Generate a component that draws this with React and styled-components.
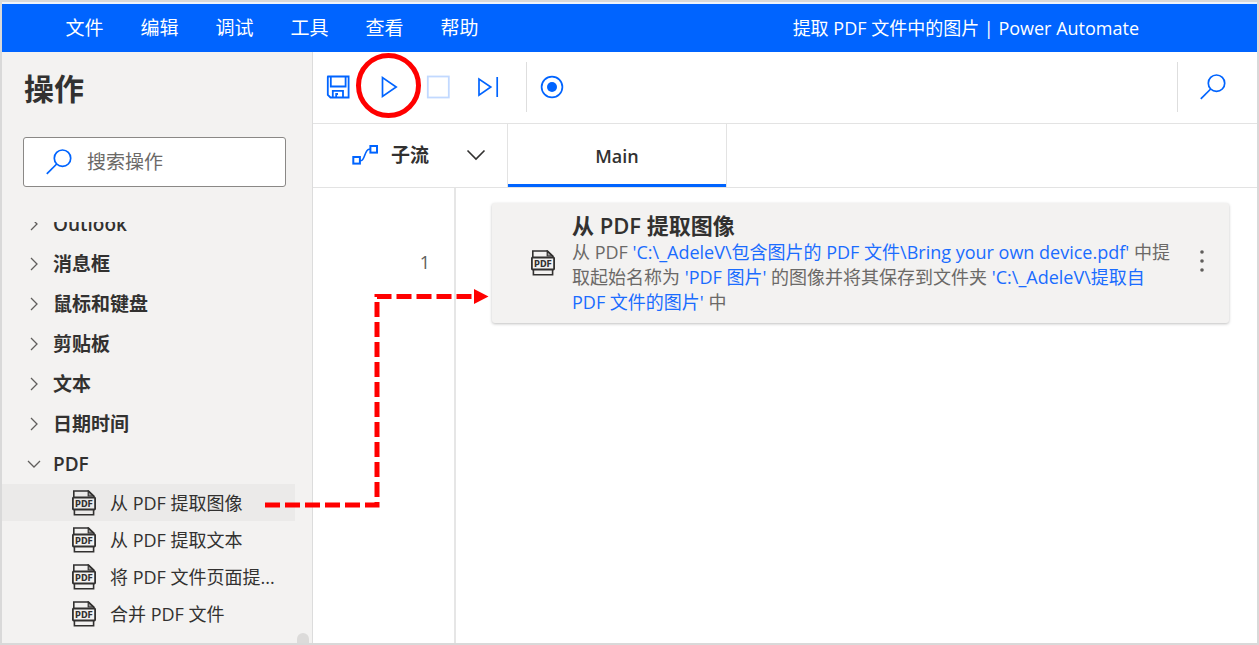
import React, { useState } from "react";
import styled, { createGlobalStyle } from "styled-components";

const BLUE = "#0064ff";
const LINE = "#e3e3e3";

const GlobalStyle = createGlobalStyle`
* {
  box-sizing: border-box;
}
body {
  margin: 0;
  background: white;
  color: #323130;
  font-family: "Open Sans", "Noto Sans CJK SC", sans-serif;
  font-size: 18px;
  line-height: 24px;
}
button, input {
  font: inherit;
  color: inherit;
}
svg {
  flex: none;
}
`;

const Window = styled.div`
  position: relative;
  display: flex;
  flex-direction: column;
  height: 100vh;
  border: 2px solid #d9d9d9;
`;
const MenuBar = styled.header`
  display: flex;
  align-items: center;
  justify-content: space-between;
  height: 50px;
  flex: none;
  padding: 0 118px 0 45px;
  border-top: 2px solid #eef3fb;
  background: ${BLUE};
  color: white;
`;
const Menu = styled.nav`
  display: flex;
`;
const MenuButton = styled.button`
  width: 75px;
  padding: 0;
  border: none;
  background: none;
  font-size: 19px;
  cursor: pointer;
`;
const Body = styled.div`
  display: flex;
  flex: 1;
  min-height: 0;
`;

const Sidebar = styled.aside`
  position: relative;
  display: flex;
  flex-direction: column;
  width: 311px;
  flex: none;
  border-right: 1px solid #dcdcdc;
  background: #f3f2f1;
`;
const Title = styled.h1`
  margin: 15px 22px 0;
  font-size: 30px;
  line-height: 44px;
  font-weight: 600;
`;
const SearchBox = styled.label`
  display: flex;
  align-items: center;
  gap: 15px;
  height: 50px;
  flex: none;
  margin: 26px 26px 35px 21px;
  padding: 0 22px;
  border: 1px solid #8a8886;
  border-radius: 3px;
  background: white;
`;
const SearchInput = styled.input`
  flex: 1;
  min-width: 0;
  padding: 0;
  border: none;
  outline: none;
  background: none;
  font-size: 19px;
  &::placeholder {
    color: #6b6967;
    opacity: 1;
  }
`;
const TreeView = styled.div`
  flex: 1;
  overflow: hidden;
`;
const Tree = styled.ul`
  margin: -18px 0 0;
  padding: 0;
  list-style: none;
`;
const Category = styled.button`
  display: flex;
  align-items: center;
  gap: 12px;
  width: 100%;
  height: 40px;
  padding: 0 25px;
  border: none;
  background: none;
  font-size: 19px;
  font-weight: 600;
  text-align: left;
  cursor: pointer;
`;
const Actions = styled.ul`
  margin: 0;
  padding: 0;
  list-style: none;
`;
const Action = styled.button`
  display: flex;
  align-items: center;
  gap: 14px;
  width: 293px;
  height: 37px;
  padding: 0 8px 0 70px;
  border: none;
  background: ${(props) => (props.$active ? "#ebeae9" : "none")};
  white-space: nowrap;
  cursor: pointer;
`;
const ScrollThumb = styled.div`
  position: absolute;
  right: 3px;
  bottom: 0;
  width: 12px;
  height: 10px;
  border-radius: 6px 6px 0 0;
  background: #dcdbda;
`;

const Main = styled.main`
  display: flex;
  flex-direction: column;
  flex: 1;
  min-width: 0;
`;
const Toolbar = styled.div`
  display: flex;
  align-items: center;
  height: 72px;
  flex: none;
  padding: 0 19px 2px 0;
  border-bottom: 1px solid ${LINE};
`;
const ToolButton = styled.button`
  position: relative;
  display: flex;
  align-items: center;
  justify-content: center;
  width: 50px;
  height: 50px;
  padding: 0;
  border: none;
  background: none;
  color: ${BLUE};
  cursor: pointer;
`;
const Divider = styled.div`
  width: 1px;
  height: 50px;
  margin-left: ${(props) => (props.$push ? "auto" : "13px")};
  margin-right: ${(props) => (props.$push ? "10px" : "0")};
  background: #dedede;
`;
const Ring = styled.span`
  position: absolute;
  left: -7px;
  top: -9px;
  width: 65px;
  height: 65px;
  border: 5px solid #f00;
  border-radius: 50%;
  pointer-events: none;
`;
const Tabs = styled.div`
  display: flex;
  height: 64px;
  flex: none;
  border-bottom: 1px solid ${LINE};
`;
const Subflows = styled.button`
  display: flex;
  align-items: center;
  width: 195px;
  padding: 0 21px 2px 39px;
  border: none;
  border-right: 1px solid ${LINE};
  background: none;
  font-size: 19px;
  font-weight: 600;
  cursor: pointer;
`;
const SubflowsLabel = styled.span`
  flex: 1;
  padding-left: 12px;
  text-align: left;
`;
const Tab = styled.button`
  width: 219px;
  border: none;
  border-right: 1px solid ${LINE};
  background: none;
  box-shadow: inset 0 -3px ${BLUE};
  font-weight: 600;
  cursor: pointer;
`;
const Canvas = styled.div`
  display: flex;
  flex: 1;
`;
const Gutter = styled.div`
  width: 143px;
  flex: none;
  padding: 62px 24px 0 0;
  border-right: 2px solid #e6e6e6;
  color: #605e5c;
  text-align: right;
`;
const Steps = styled.div`
  flex: 1;
  padding: 15px 28px 0 36px;
`;
const Card = styled.article`
  display: flex;
  align-items: center;
  padding: 8px 13px 8px 39px;
  border-radius: 3px;
  background: #f3f2f1;
  box-shadow: 0 1px 3px rgba(0, 0, 0, 0.25);
`;
const CardBody = styled.div`
  flex: 1;
  padding: 0 8px 0 17px;
`;
const CardTitle = styled.h2`
  margin: 0;
  font-size: 22px;
  line-height: 29px;
  font-weight: 600;
`;
const Description = styled.p`
  margin: 0;
  line-height: 25px;
  color: #6b6967;
`;
const Value = styled.span`
  color: #1a6cff;
`;
const More = styled.button`
  display: flex;
  padding: 0 0 4px;
  border: none;
  background: none;
  color: #605e5c;
  cursor: pointer;
`;
const Flight = styled.svg`
  position: absolute;
  left: 263px;
  top: 286px;
  pointer-events: none;
`;

const SearchIcon = () => (
  <svg width="26" height="26" viewBox="0 0 26 26" fill="none" stroke={BLUE} strokeWidth="1.7">
    <circle cx="16.5" cy="9.2" r="8.2" />
    <path d="M10.7 15 L0.8 24.9" />
  </svg>
);

const PdfIcon = () => (
  <svg width="24" height="26" viewBox="0 0 24 26" fill="none" stroke="#323130" strokeWidth="1.6">
    <path d="M1.8 7.500 V1 H16.5 L21.8 6 V7.500" />
    <path d="M16.2 1 V6 H21.5 Z" fill="#323130" fillOpacity="0.45" strokeWidth="1.2" />
    <rect x="0.9" y="7.500" width="22.2" height="12" rx="0.8" strokeWidth="1.8" />
    <path d="M2.4 19.500 V24.800 H21.6 V19.500" />
    <text x="12" y="16.5" textAnchor="middle" fontFamily="DejaVu Sans" fontSize="8" fontWeight="700" fill="#323130" stroke="none">
      PDF
    </text>
  </svg>
);

const Chevron = ({ open }) => (
  <svg width="14" height="14" viewBox="0 0 14 14" fill="none" stroke="#605e5c" strokeWidth="1.3">
    <path d={open ? "M1 4 L7 10 L13 4" : "M4 1 L10 7 L4 13"} />
  </svg>
);

const SaveIcon = () => (
  <svg width="24" height="24" viewBox="0 0 24 24" fill="none" stroke="currentColor" strokeWidth="1.8">
    <path d="M2 1.5 H22.6 V22.5 H4.5 L1.8 19.8 V2 Z" />
    <path d="M4.8 1.5 V11.5 H19.6 V1.5" />
    <path d="M6.8 22.5 V15.8 H17 V22.5 M10.2 22.5 V19 H12" />
  </svg>
);

const PlayIcon = () => (
  <svg width="24" height="24" viewBox="0 0 24 24" fill="none" stroke="currentColor" strokeWidth="1.7">
    <path d="M6.5 2.5 V21.5 L20.2 12 Z" />
  </svg>
);

const StopIcon = () => (
  <svg width="24" height="24" viewBox="0 0 24 24" fill="none" stroke="#c2d9ff" strokeWidth="1.8">
    <rect x="1.8" y="1.5" width="21" height="21" />
  </svg>
);

const StepIcon = () => (
  <svg width="24" height="24" viewBox="0 0 24 24" fill="none" stroke="currentColor" strokeWidth="1.7">
    <path d="M3 4 V20.2 L14.8 12 Z M21.2 2 V22" />
  </svg>
);

const RecordIcon = () => (
  <svg width="24" height="24" viewBox="0 0 24 24" fill="none" stroke="currentColor" strokeWidth="1.7">
    <circle cx="12" cy="12" r="10.4" />
    <circle cx="12" cy="12" r="5" fill="currentColor" stroke="none" />
  </svg>
);

const FlowIcon = () => (
  <svg width="27" height="22" viewBox="0 0 27 22" fill="none" stroke={BLUE} strokeWidth="2">
    <rect x="1.3" y="13" width="6.6" height="6.6" />
    <rect x="18.4" y="2" width="6.6" height="6.6" />
    <path d="M8 16.5 H9.5 C12.5 16 13 5.5 17 5.2 H18.3" strokeWidth="1.6" />
  </svg>
);

const menus = ["文件", "编辑", "调试", "工具", "查看", "帮助"];
const categories = ["Outlook", "消息框", "鼠标和键盘", "剪贴板", "文本", "日期时间", "PDF"];
const pdfActions = ["从 PDF 提取图像", "从 PDF 提取文本", "将 PDF 文件页面提...", "合并 PDF 文件"];

export default function App() {
  const [active, setActive] = useState(0);
  const [query, setQuery] = useState("");

  return (
    <>
      <GlobalStyle />
      <Window>
        <MenuBar>
          <Menu>
            {menus.map((name) => (
              <MenuButton key={name}>{name}</MenuButton>
            ))}
          </Menu>
          <span>提取 PDF 文件中的图片 | Power Automate</span>
        </MenuBar>
        <Body>
          <Sidebar>
            <Title>操作</Title>
            <SearchBox>
              <SearchIcon />
              <SearchInput
                type="text"
                placeholder="搜索操作"
                value={query}
                onChange={(e) => setQuery(e.target.value)}
              />
            </SearchBox>
            <TreeView>
              <Tree>
                {categories.map((name) => (
                  <li key={name}>
                    <Category aria-expanded={name === "PDF"}>
                      <Chevron open={name === "PDF"} />
                      {name}
                    </Category>
                    {name === "PDF" && (
                      <Actions>
                        {pdfActions.map((action, i) => (
                          <li key={action}>
                            <Action $active={i === active} onClick={() => setActive(i)}>
                              <PdfIcon />
                              {action}
                            </Action>
                          </li>
                        ))}
                      </Actions>
                    )}
                  </li>
                ))}
              </Tree>
            </TreeView>
            <ScrollThumb />
          </Sidebar>
          <Main>
            <Toolbar>
              <ToolButton aria-label="保存"><SaveIcon /></ToolButton>
              <ToolButton aria-label="运行">
                <PlayIcon />
                <Ring />
              </ToolButton>
              <ToolButton aria-label="停止" disabled><StopIcon /></ToolButton>
              <ToolButton aria-label="运行下一个操作"><StepIcon /></ToolButton>
              <Divider />
              <ToolButton aria-label="录制"><RecordIcon /></ToolButton>
              <Divider $push />
              <ToolButton aria-label="搜索"><SearchIcon /></ToolButton>
            </Toolbar>
            <Tabs>
              <Subflows>
                <FlowIcon />
                <SubflowsLabel>子流</SubflowsLabel>
                <svg width="20" height="12" viewBox="0 0 20 12" fill="none" stroke="#323130" strokeWidth="1.6">
                  <path d="M1.5 1.5 L10 10 L18.5 1.5" />
                </svg>
              </Subflows>
              <Tab>Main</Tab>
            </Tabs>
            <Canvas>
              <Gutter>1</Gutter>
              <Steps>
                <Card>
                  <PdfIcon />
                  <CardBody>
                    <CardTitle>从 PDF 提取图像</CardTitle>
                    <Description>
                      从 PDF <Value>'C:\_AdeleV\包含图片的 PDF 文件\Bring your own device.pdf'</Value>{" "}
                      中提取起始名称为 <Value>'PDF 图片'</Value> 的图像并将其保存到文件夹{" "}
                      <Value>'C:\_AdeleV\提取自 PDF 文件的图片'</Value> 中
                    </Description>
                  </CardBody>
                  <More aria-label="更多操作">
                    <svg width="28" height="24" viewBox="0 0 28 24" fill="currentColor">
                      <circle cx="14" cy="3" r="1.8" />
                      <circle cx="14" cy="12" r="1.8" />
                      <circle cx="14" cy="21" r="1.8" />
                    </svg>
                  </More>
                </Card>
              </Steps>
            </Canvas>
          </Main>
        </Body>
        <Flight width="226" height="224" viewBox="0 0 226 224" fill="none" stroke="#f00" strokeWidth="5">
          <path d="M0 217 H112 V8.500 H209" strokeDasharray="15 5" />
          <path d="M209 1 L223.500 8.500 L209 16 Z" fill="#f00" stroke="none" />
        </Flight>
      </Window>
    </>
  );
}
